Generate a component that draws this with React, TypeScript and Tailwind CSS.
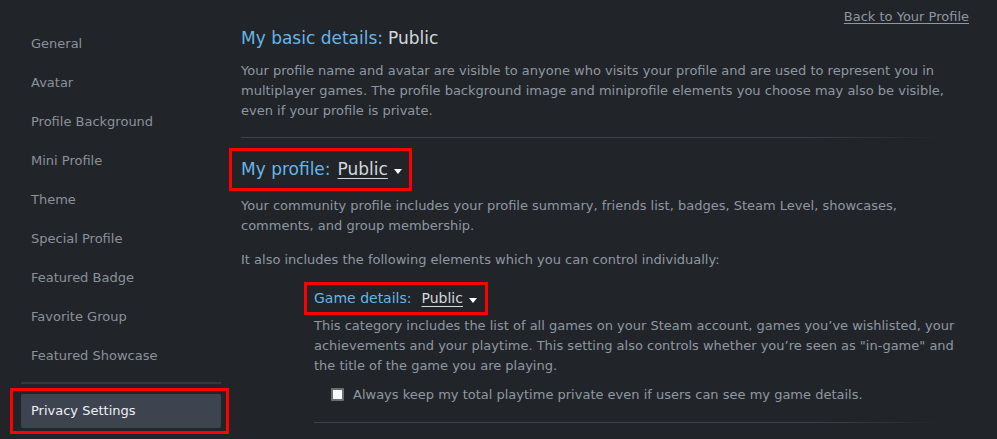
import React from "react";

const navItems = [
  "General",
  "Avatar",
  "Profile Background",
  "Mini Profile",
  "Theme",
  "Special Profile",
  "Featured Badge",
  "Favorite Group",
  "Featured Showcase",
];

function Caret() {
  return (
    <svg width="8" height="5" viewBox="0 0 8 5" className="ml-[6px] mt-[3px]">
      <path d="M0 0 L8 0 L4 5 Z" fill="#ffffff" />
    </svg>
  );
}

function Divider() {
  return (
    <div className="h-px w-full bg-[linear-gradient(to_right,#3b424b_0%,#3b424b_80%,rgba(59,66,75,0)_100%)]" />
  );
}

export default function App() {
  return (
    <div
      className="w-[997px] h-[439px] overflow-hidden bg-[#212429] flex"
      style={{ fontFamily: '"DejaVu Sans", "Liberation Sans", sans-serif' }}
    >
      {/* Sidebar */}
      <div className="w-[229px] shrink-0 pl-[10px] pt-[24px] flex flex-col">
        <div className="pl-[11px] w-[211px] flex flex-col">
          {navItems.map((t) => (
            <div
              key={t}
              className="h-[39px] flex items-center pl-[10px] text-[13px] text-[#8b929a]"
            >
              {t}
            </div>
          ))}
          <div className="mt-[7px] h-[2px] w-[200px] bg-[#33383f]" />
        </div>
        <div className="mt-[4px] w-[219px] h-[46px] border-[3px] border-[#ff0000] pl-[8px] pt-[3px]">
          <div className="w-[200px] h-[34px] rounded-[2px] bg-[#3d4450] flex items-center pl-[10px] text-[13px] text-[#eef1f4]">
            Privacy Settings
          </div>
        </div>
      </div>

      {/* Main */}
      <div className="flex-1 pr-[28px] flex flex-col relative">
        <div className="flex justify-end pt-[7px] h-[24px]">
          <span className="text-[13px] text-[#8f98a0] underline underline-offset-2">
            Back to Your Profile
          </span>
        </div>
        <div className="pl-[12px] pr-[24px]">
          <div className="flex items-baseline text-[17px] leading-[26px] mt-[1px]">
            <span className="text-[#67b6e6]">My basic details:</span>
            <span className="ml-[5px] text-[#d3d8dd]">Public</span>
          </div>
          <p className="mt-[10px] text-[13px] leading-[20px] text-[#8f98a0]">
            Your profile name and avatar are visible to anyone who visits your profile and are used to represent you in
            multiplayer games. The profile background image and miniprofile elements you choose may also be visible,
            even if your profile is private.
          </p>
          <div className="mt-[16px]">
            <Divider />
          </div>
        </div>

        <div className="mt-[10px] self-start h-[43px] border-[3px] border-[#ff0000] pl-[9px] pr-[7px] flex items-center">
          <span className="text-[17px] text-[#67b6e6]">My profile:</span>
          <span className="ml-[7px] text-[17px] text-[#d3d8dd] underline underline-offset-[3px] decoration-1">
            Public
          </span>
          <Caret />
        </div>

        <div className="pl-[12px] pr-[24px]">
          <p className="mt-[5px] text-[13px] leading-[20px] text-[#8f98a0]">
            Your community profile includes your profile summary, friends list, badges, Steam Level, showcases,
            comments, and group membership.
          </p>
          <p className="mt-[14px] text-[13px] leading-[20px] text-[#8f98a0]">
            It also includes the following elements which you can control individually:
          </p>
        </div>

        <div className="ml-[75px] mt-[12px] self-start h-[33px] border-[3px] border-[#ff0000] pl-[7px] pr-[8px] flex items-center">
          <span className="text-[14px] text-[#67b6e6]">Game details:</span>
          <span className="ml-[10px] text-[14px] text-[#d3d8dd] underline underline-offset-[3px] decoration-1">
            Public
          </span>
          <Caret />
        </div>

        <div className="pl-[85px] pr-[12px]">
          <p className="mt-[1px] text-[13px] leading-[20px] text-[#8f98a0]">
            This category includes the list of all games on your Steam account, games you’ve wishlisted, your
            achievements and your playtime. This setting also controls whether you’re seen as "in-game" and
            the title of the game you are playing.
          </p>
          <div className="mt-[9px] ml-[17px] flex items-center">
            <div className="w-[13px] h-[13px] bg-white border-2 border-[#6b7078] rounded-[1px]" />
            <span className="ml-[9px] text-[13px] text-[#8f98a0]">
              Always keep my total playtime private even if users can see my game details.
            </span>
          </div>
          <div className="mt-[17px] mr-[12px]">
            <Divider />
          </div>
        </div>
      </div>
    </div>
  );
}
